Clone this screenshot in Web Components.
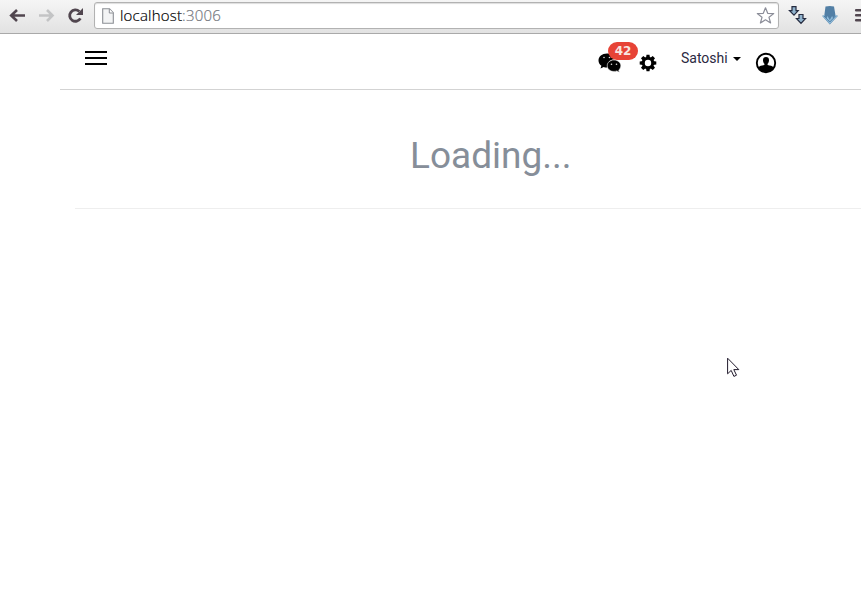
<!DOCTYPE html>
<html lang="en">
<head>
<meta charset="utf-8">
<title>Loading</title>
<style>
html, body { margin: 0; height: 100%; overflow: hidden; background: #fff; }
body { font-family: Roboto, sans-serif; }
</style>
</head>
<body>
<app-window></app-window>
<script>
function define(name, markup) {
  const template = document.createElement('template');
  template.innerHTML = markup;
  customElements.define(name, class extends HTMLElement {
    constructor() {
      super();
      this.attachShadow({ mode: 'open' }).appendChild(template.content.cloneNode(true));
    }
  });
}

define('browser-bar', `
<style>
:host { display: flex; box-sizing: border-box; width: 878px; height: 34px; background: linear-gradient(#f5f5f5, #e2e2e2); border-bottom: 1px solid #a9a9a9; }
svg { display: block; flex: none; }
.nav { display: flex; width: 94px; padding: 7px 0 0 9px; box-sizing: border-box; gap: 12px; }
.address { display: flex; box-sizing: border-box; width: 685px; height: 27px; margin-top: 2px; background: #fff; border: 1px solid #b2b2b2; border-radius: 3px; padding: 5px 3px 0 7px; box-shadow: inset 0 1px 1px #ddd; }
.url { margin: -3px auto 0 6px; font: 300 15px/20px "Open Sans", sans-serif; letter-spacing: .2px; color: #000; -webkit-text-stroke: .2px currentColor; }
.port { color: #75797f; }
.star { margin-top: -1px; }
.tools { display: flex; padding: 5px 0 0 9px; gap: 12px; }
</style>
<div class="nav">
  <svg width="17" height="17" viewBox="0 0 17 17" fill="none" stroke="#51464f" stroke-width="2.6"><path d="M16 8.5H2M8 3L2.2 8.5 8 14"/></svg>
  <svg width="17" height="17" viewBox="0 0 17 17" fill="none" stroke="#c3c4c5" stroke-width="2.6"><path d="M1 8.5h13M9 3l5.5 5.5L9 14"/></svg>
  <svg width="17" height="17" viewBox="0 0 17 17"><path d="M13.4 11.3A5.7 5.7 0 1 1 12.3 4.4" fill="none" stroke="#51464f" stroke-width="2.8"/><path d="M16 1v7H9z" fill="#51464f"/></svg>
</div>
<div class="address">
  <svg width="12" height="16" viewBox="0 0 12 16"><path d="M.7.8h6.8l3.8 4v10.5H.7z" fill="#f3f4f5" stroke="#8b8e94" stroke-width="1.1"/><path d="M7.3 1v4h4" fill="#fff" stroke="#8b8e94"/></svg>
  <span class="url">localhost<span class="port">:3006</span></span>
  <svg class="star" width="19" height="17" viewBox="0 0 19 17"><path d="M9.5.8l2.2 5.5 6 .3-4.7 3.7 1.6 5.7-5.1-3.2L4.4 16 6 10.3 1.300 6.600l6-.3z" fill="#fff" stroke="#8b8d98" stroke-width="1.200" stroke-linejoin="round"/></svg>
</div>
<div class="tools">
  <svg width="20" height="20" viewBox="0 0 20 20" fill="#91b4ce" stroke="#252b40" stroke-width="1.200"><path d="M4 1.700h4v4h2.200L6 10.200 1.500 5.700H4zM11 9.500h4v4h2.500L13 18.300l-4.500-4.800H11z"/></svg>
  <svg width="20" height="20" viewBox="0 0 20 20"><path d="M5.500 1.500q4.500-1 8.500 0l1.500 9 2.500.3-8.200 8.700L2 10.800l2.300-.3z" fill="#527fa5"/><path d="M2.500 11L4.300 10l2 3.700L7.500 11l2.300 4 2.300-4 1.200 2.700 2.200-3.700 2 1-7.700 8z" fill="#8fbcdb"/><path d="M4 11l5.800 6 5.700-6" fill="none" stroke="#527fa5"/></svg>
  <svg width="20" height="20" viewBox="0 0 20 20" stroke="#51464f" stroke-width="2.600" stroke-linecap="round"><path d="M4.200 5.300h13M4.200 10.300h13M4.200 15.300h13"/></svg>
</div>`);

define('count-badge', `
<style>
:host { display: block; width: 30px; height: 18px; border-radius: 9px; background: #e74336; color: #f8e6e2; text-align: center; font: bold 12px/18px "DejaVu Sans", sans-serif; }
</style><slot></slot>`);

define('app-header', `
<style>
:host { display: flex; box-sizing: border-box; height: 56px; padding-left: 25px; border-bottom: 1px solid #d3d3d3; }
svg { display: block; flex: none; }
.menu { margin-top: 17px; }
.right { display: flex; margin-left: 491px; }
.chat { position: relative; margin-top: 18px; width: 24px; }
count-badge { position: absolute; left: 10px; top: -10px; }
.gear { margin: 20px 0 0 17px; }
.name { margin: 14px 0 0 24px; font: 14px/20px Roboto, sans-serif; color: #2b2942; width: 52px; white-space: nowrap; }
.caret { margin-top: 23px; }
.user { margin: 18px 0 0 14px; }
</style>
<svg class="menu" width="22" height="14" viewBox="0 0 22 14"><path d="M0 0h22v2H0zM0 6h22v2H0zM0 12h22v2H0z"/></svg>
<div class="right">
  <div class="chat">
    <svg width="24" height="22" viewBox="-.5 .5 24 22"><path d="M8.500 2C3.500 2 0 5 0 9c0 2.200 1.100 4 2.900 5.300L2 17l3.200-1.600q1.600.6 3.600.5C8 11.500 11.200 8 16 7.800 15.200 4.300 12.200 2 8.500 2z"/><path d="M15.400 8.600c-4 0-6.700 2.600-6.700 5.600 0 3.300 3 5.700 6.700 5.700q1.600 0 2.900-.5l2.600 1.400-.7-2.300c1.300-1 2.100-2.500 2.100-4.300 0-3-3-5.600-6.900-5.600z" stroke="#fff" stroke-width=".5"/><g fill="#ddd"><circle cx="5.500" cy="6" r=".8"/><circle cx="11" cy="6" r=".8"/><circle cx="13" cy="12.700" r=".8"/><circle cx="18" cy="12.700" r=".8"/></g></svg>
    <count-badge>42</count-badge>
  </div>
  <svg class="gear" width="18" height="18" viewBox="-9 -9 18 18"><circle r="4.700" fill="none" stroke="#000" stroke-width="3"/><path d="M-1.500-8.300h3L2-5h-4zM-1.500 8.300h3L2 5h-4zM-8.300-1.500v3L-5 2v-4zM8.300-1.500v3L5 2v-4z"/><path transform="rotate(45)" d="M-1.600-8.300h3.200L2-5h-4zM-1.600 8.300h3.200L2 5h-4zM-8.300-1.600v3.200L-5 2v-4zM8.300-1.600v3.200L5 2v-4z"/></svg>
  <span class="name">Satoshi</span>
  <svg class="caret" width="8" height="4" viewBox="0 0 8 4"><path d="M0 0h8L4 4z"/></svg>
  <svg class="user" width="22" height="22" viewBox="0 0 22 22"><circle cx="11" cy="11" r="9.200" fill="#fff" stroke="#000" stroke-width="1.900"/><path d="M11 5c-2 0-3 1.200-3 3.200 0 1.600.6 2.800 1.400 3.600v1.200c-2.500.5-4.900 1.100-6 2.200 1.500 3 4.300 4.800 7.600 4.800s6.100-1.800 7.600-4.800c-1.100-1.100-3.500-1.700-6-2.200v-1.200c.8-.8 1.400-2 1.400-3.600C14 6.200 13 5 11 5z"/></svg>
</div>`);

define('page-title', `
<style>
:host { display: block; box-sizing: border-box; height: 119px; margin-left: 15px; padding: 44px 0 0 335px; border-bottom: 1px solid #eee; }
h1 { margin: 0; font: 400 37px/44px Roboto, sans-serif; color: #868e99; white-space: nowrap; }
</style><h1><slot></slot></h1>`);

define('mouse-pointer', `
<style>
:host { position: absolute; left: 727px; top: 357px; }
svg { display: block; }
</style>
<svg width="13" height="21" viewBox="0 0 13 21"><path d="M.6 1.200v15.600l3.600-3.400 2.700 6 2.600-1.200-2.700-5.600h5z" fill="#fff" stroke="#211a2c" stroke-width="1"/></svg>`);

define('app-window', `
<style>
:host { display: block; position: relative; width: 861px; height: 593px; overflow: hidden; }
main { margin-left: 60px; }
</style>
<browser-bar></browser-bar>
<main>
  <app-header></app-header>
  <page-title>Loading...</page-title>
</main>
<mouse-pointer></mouse-pointer>`);
</script>
</body>
</html>
